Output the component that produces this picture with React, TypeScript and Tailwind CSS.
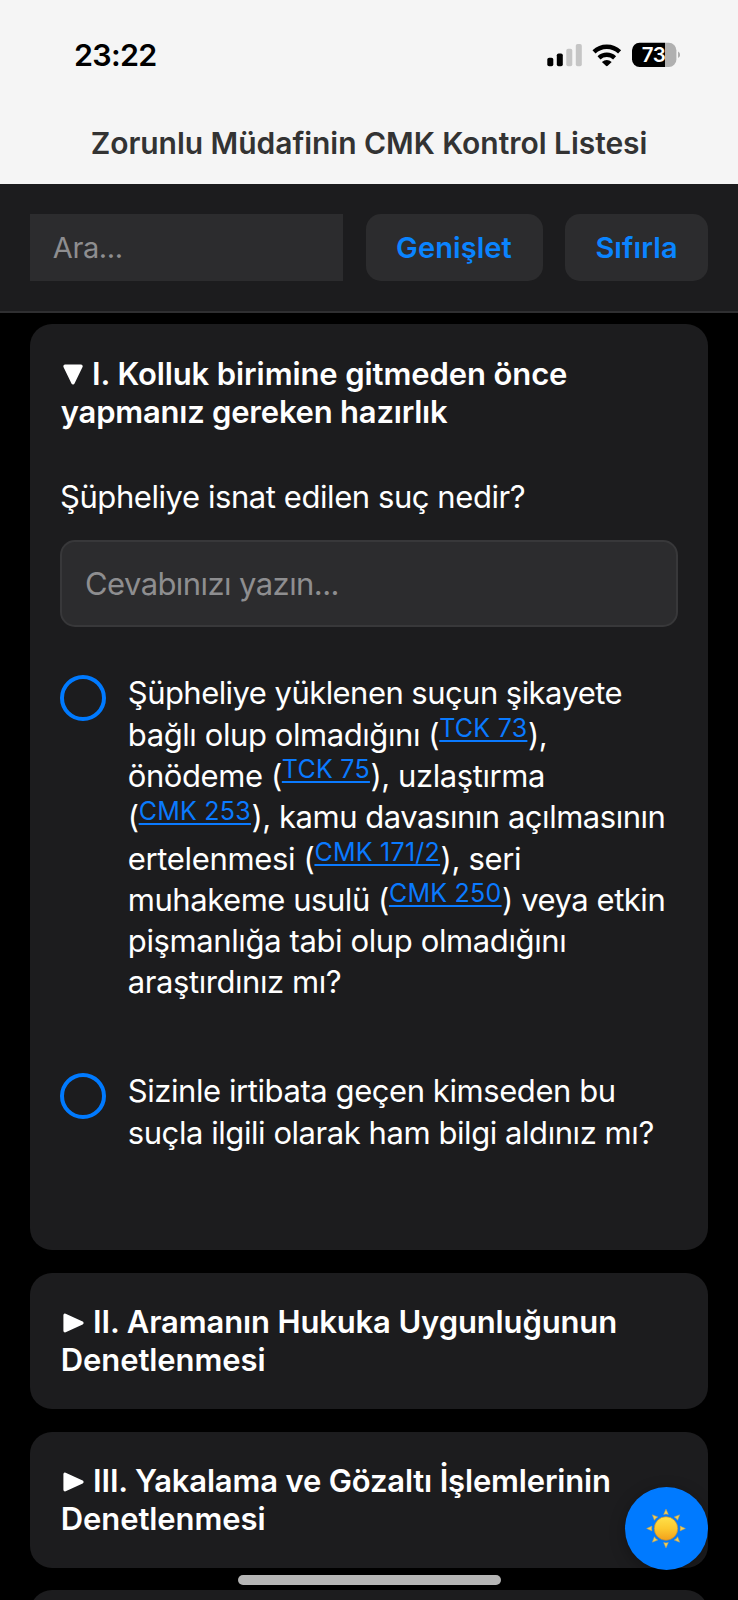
import type { ReactNode } from "react";

function StatusBar() {
  return (
    <div className="flex h-[109px] items-start justify-between pl-[74px] pr-[58px] pt-[37px] text-black">
      <span className="text-[30.5px] leading-[36px] font-semibold tracking-[-0.7px]">23:22</span>
      <svg className="mt-[5px] h-[26px] w-[134px]" viewBox="546 42 134 26">
        <rect x="547.3" y="57.8" width="6" height="8.4" rx="1.8" fill="#000" />
        <rect x="556.8" y="53.4" width="6" height="12.8" rx="1.8" fill="#000" />
        <rect x="566.3" y="48.8" width="6" height="17.4" rx="1.8" fill="#c5c5c5" />
        <rect x="575.8" y="44" width="6" height="22.2" rx="1.8" fill="#c5c5c5" />
        <g fill="none" stroke="#000" strokeWidth="4.4">
          <path d="M594 51.8a18.6 18.6 0 0 1 25.6 0" />
          <path d="M599 57.8a11.6 11.6 0 0 1 15.6 0" />
        </g>
        <path d="M601.9 62q4.9-4 9.8 0l-4 3.8q-.9.9-1.8 0z" fill="#000" />
        <clipPath id="battery">
          <rect x="632" y="42.7" width="44.4" height="24.4" rx="7.6" />
        </clipPath>
        <g clipPath="url(#battery)">
          <rect x="632" y="42" width="33" height="26" fill="#000" />
          <rect x="665" y="42" width="12" height="26" fill="#b0b0b0" />
        </g>
        <path d="M678 51.6q4.6 3.1 0 6.4z" fill="#b0b0b0" />
        <text x="653.6" y="62" textAnchor="middle" fontSize="20.5" fontWeight="600" letterSpacing="-0.5" fill="#fff">
          73
        </text>
      </svg>
    </div>
  );
}

function Line({ className, children }: { className: string; children: ReactNode }) {
  return <span className={`block whitespace-nowrap ${className}`}>{children}</span>;
}

function Ref({ children }: { children: ReactNode }) {
  return (
    <a
      href="#"
      className="mr-[0.5px] align-[8.6px] text-[25px] leading-none tracking-[0.25px] text-[#0a7aff] underline decoration-[2px] underline-offset-[3px]"
    >
      {children}
    </a>
  );
}

function Marker({ open }: { open?: boolean }) {
  return open ? (
    <svg className="mr-[8.5px] ml-[0.8px] inline-block h-[22px] w-[22px] align-[-1px]" viewBox="0 0 22 22">
      <path d="M3 2.2h16L11 18.8z" fill="#fff" stroke="#fff" strokeWidth="3.4" strokeLinejoin="round" />
    </svg>
  ) : (
    <svg className="mr-[8.5px] ml-[0.8px] inline-block h-[22px] w-[23px] align-[-1px]" viewBox="0 0 23 22">
      <path d="M3 3.2v15.6L20 11z" fill="#fff" stroke="#fff" strokeWidth="3.2" strokeLinejoin="round" />
    </svg>
  );
}

function Card({ className = "", children }: { className?: string; children?: ReactNode }) {
  return (
    <section className={`shrink-0 rounded-[22px] bg-[#1c1c1e] px-[30px] pt-[30px] ${className}`}>{children}</section>
  );
}

function Heading({ children }: { children: ReactNode }) {
  return <h2 className="pl-[0.8px] text-[31px] leading-[38.4px] font-semibold text-white">{children}</h2>;
}

function CheckItem({ className = "", children }: { className?: string; children: ReactNode }) {
  return (
    <label className={`flex items-start ${className}`}>
      <span className="mt-[2.7px] h-[46px] w-[46px] shrink-0 rounded-full border-4 border-[#007aff]" />
      <span className="ml-[21.8px] block text-[31px] leading-[41.3px] text-white">{children}</span>
    </label>
  );
}

export default function App() {
  return (
    <div className="relative flex h-[1600px] w-[738px] flex-col overflow-hidden bg-black font-['Inter',sans-serif]">
      <header className="h-[184px] shrink-0 bg-[#f5f5f5]">
        <StatusBar />
        <h1 className="pt-[14px] text-center text-[30px] leading-[40px] font-semibold tracking-[-0.04px] whitespace-nowrap text-[#333]">
          Zorunlu Müdafinin CMK Kontrol Listesi
        </h1>
      </header>

      <div className="flex h-[129px] shrink-0 items-start border-b-2 border-[#2f2f31] bg-[#1c1c1e] px-[30px] pt-[29.5px] text-[29px] leading-[67.5px]">
        <div className="h-[67.5px] w-[313px] bg-[#2c2c2e] pl-[22.8px] tracking-[-0.4px] text-[#8e8e90]">Ara...</div>
        <button className="ml-[22.5px] h-[67.5px] w-[177px] rounded-[15px] bg-[#2c2c2e] font-semibold tracking-[0.09px] text-[#0a84ff]">
          Genişlet
        </button>
        <button className="ml-[22.5px] h-[67.5px] w-[143px] rounded-[15px] bg-[#2c2c2e] font-semibold tracking-[0.08px] text-[#0a84ff]">
          Sıfırla
        </button>
      </div>

      <main className="flex flex-col gap-[22.5px] px-[30px] pt-[11.3px]">
        <Card className="h-[926px]">
          <div className="pt-[0.6px]">
            <Heading>
              <Line className="tracking-[-0.1px]">
                <Marker open />
                I. Kolluk birimine gitmeden önce
              </Line>
              <Line className="tracking-[-0.22px]">yapmanız gereken hazırlık</Line>
            </Heading>
          </div>
          <p className="mt-[44.6px] text-[31px] leading-[41.3px] tracking-[-0.43px] text-white">
            Şüpheliye isnat edilen suç nedir?
          </p>
          <div className="mt-[22.4px] h-[87.4px] rounded-[15px] border-2 border-[#38383a] bg-[#2c2c2e] pl-[23px] text-[31px] leading-[84px] tracking-[-0.58px] text-[#8e8e90]">
            Cevabınızı yazın...
          </div>
          <CheckItem className="mt-[45px]">
            <Line className="tracking-[-0.55px]">Şüpheliye yüklenen suçun şikayete</Line>
            <Line className="tracking-[-0.42px]">
              bağlı olup olmadığını (<Ref>TCK 73</Ref>),
            </Line>
            <Line className="tracking-[-0.42px]">
              önödeme (<Ref>TCK 75</Ref>), uzlaştırma
            </Line>
            <Line className="tracking-[-0.47px]">
              (<Ref>CMK 253</Ref>), kamu davasının açılmasının
            </Line>
            <Line className="tracking-[-0.35px]">
              ertelenmesi (<Ref>CMK 171/2</Ref>), seri
            </Line>
            <Line className="tracking-[-0.46px]">
              muhakeme usulü (<Ref>CMK 250</Ref>) veya etkin
            </Line>
            <Line className="tracking-[-0.38px]">pişmanlığa tabi olup olmadığını</Line>
            <Line className="tracking-[-0.43px]">araştırdınız mı?</Line>
          </CheckItem>
          <CheckItem className="mt-[67.6px]">
            <Line className="tracking-[-0.43px]">Sizinle irtibata geçen kimseden bu</Line>
            <Line className="tracking-[-0.44px]">suçla ilgili olarak ham bilgi aldınız mı?</Line>
          </CheckItem>
        </Card>

        <Card className="h-[136.3px]">
          <Heading>
            <Line className="tracking-[-0.14px]">
              <Marker />
              II. Aramanın Hukuka Uygunluğunun
            </Line>
            <Line className="tracking-[-0.1px]">Denetlenmesi</Line>
          </Heading>
        </Card>

        <Card className="h-[136.3px]">
          <Heading>
            <Line className="tracking-[-0.17px]">
              <Marker />
              III. Yakalama ve Gözaltı İşlemlerinin
            </Line>
            <Line className="tracking-[-0.1px]">Denetlenmesi</Line>
          </Heading>
        </Card>

        <Card className="h-[136.3px]" />
      </main>

      <button className="absolute top-[1486.5px] left-[624.8px] flex h-[83px] w-[83px] items-center justify-center rounded-full bg-[#007aff] shadow-[0_4px_16px_rgba(0,0,0,0.3)]">
        <svg className="h-[42px] w-[42px]" viewBox="-21 -21.5 42 42">
          <defs>
            <linearGradient id="sun" x1="0" y1="0" x2="0" y2="1">
              <stop offset="0" stopColor="#ffe14a" />
              <stop offset="0.5" stopColor="#fcc92f" />
              <stop offset="1" stopColor="#f2a01c" />
            </linearGradient>
          </defs>
          {[0, 45, 90, 135, 180, 225, 270, 315].map((a) => (
            <path
              key={a}
              d="M-2.4 -14 L0 -19.4 L2.4 -14 Q0 -14.8 -2.4 -14z"
              fill="#f0cf55"
              stroke="#b99a5c"
              strokeWidth="0.5"
              transform={`rotate(${a})`}
            />
          ))}
          <circle r="11.8" fill="url(#sun)" stroke="#b98a3c" strokeWidth="0.7" />
        </svg>
      </button>

      <div className="absolute top-[1575px] left-[238px] h-[10px] w-[262.5px] rounded-full bg-[#b5b5b5]" />
    </div>
  );
}
